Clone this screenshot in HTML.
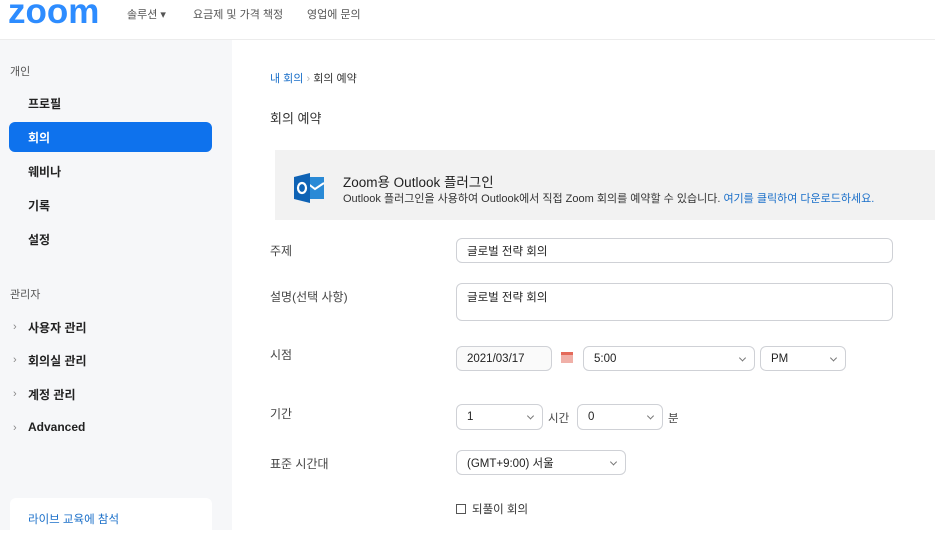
<!DOCTYPE html>
<html><head><meta charset="utf-8"><style>
*{margin:0;padding:0;box-sizing:border-box}
body{width:935px;height:530px;overflow:hidden;background:#fff;font-family:"Liberation Sans","Noto Sans CJK KR",sans-serif;color:#232333;position:relative}
.a{position:absolute;white-space:nowrap}
.hdr{position:absolute;left:0;top:0;width:935px;height:40px;border-bottom:1px solid #ececec;background:#fff}
.nav{font-size:11px;color:#555;top:6px}
.side{position:absolute;left:0;top:40px;width:232px;height:490px;background:#f6f7f9}
.si{font-size:12px;font-weight:bold;color:#222;left:28px}
.sh{font-size:11px;color:#555;left:10px}
.ar{font-size:11px;color:#888;left:13px}
.lbl{font-size:12px;color:#444;left:270px}
.box{position:absolute;border:1px solid #cfd1d6;border-radius:6px;background:#fff;font-size:11.5px;color:#222;padding-left:10px;display:flex;align-items:center}
.chev{position:absolute;right:9px;top:50%;width:5px;height:5px;border-right:1px solid #777;border-bottom:1px solid #777;transform:translateY(-70%) rotate(45deg)}
</style></head><body>
<div class="hdr">
<div class="a" style="left:8px;top:-6px;font-size:35px;line-height:1;font-weight:bold;color:#2d8cff;letter-spacing:0px;font-family:'Liberation Sans',sans-serif">zoom</div>
<div class="a nav" style="left:127px">솔루션 ▾</div>
<div class="a nav" style="left:193px">요금제 및 가격 책정</div>
<div class="a nav" style="left:307px">영업에 문의</div>
</div>
<div class="side"></div>
<div class="a sh" style="top:63px">개인</div>
<div class="a si" style="top:95px">프로필</div>
<div class="a" style="left:9px;top:122px;width:203px;height:30px;background:#0e72ed;border-radius:6px"></div>
<div class="a si" style="top:129px;color:#fff">회의</div>
<div class="a si" style="top:163px">웨비나</div>
<div class="a si" style="top:197px">기록</div>
<div class="a si" style="top:231px">설정</div>
<div class="a sh" style="top:286px">관리자</div>
<div class="a ar" style="top:321px">›</div><div class="a si" style="top:319px">사용자 관리</div>
<div class="a ar" style="top:354px">›</div><div class="a si" style="top:352px">회의실 관리</div>
<div class="a ar" style="top:388px">›</div><div class="a si" style="top:386px">계정 관리</div>
<div class="a ar" style="top:422px">›</div><div class="a si" style="top:420px">Advanced</div>
<div class="a" style="left:10px;top:498px;width:202px;height:40px;background:#fff;border-radius:6px"></div>
<div class="a" style="left:28px;top:511px;font-size:11.5px;color:#1a6fc9">라이브 교육에 참석</div>

<div class="a" style="left:270px;top:70px;font-size:11px;color:#1a6fc9">내 회의 <span style="color:#bbb">›</span> <span style="color:#333">회의 예약</span></div>
<div class="a" style="left:270px;top:108px;font-size:13px;color:#333">회의 예약</div>
<div class="a" style="left:275px;top:150px;width:660px;height:70px;background:#f2f2f2"></div>
<svg class="a" style="left:293px;top:171px" width="34" height="34" viewBox="0 0 34 34"><path d="M11 6h20v22H11z" fill="#2a8ad6"/><path d="M14 12l8 6 9-6" stroke="#fff" stroke-width="2" fill="none"/><path d="M1 6l16-4v30L1 28z" fill="#0f63b5"/><ellipse cx="9" cy="17" rx="4" ry="5" fill="none" stroke="#fff" stroke-width="2.2"/></svg>
<div class="a" style="left:343px;top:171px;font-size:13.5px;color:#222">Zoom용 Outlook 플러그인</div>
<div class="a" style="left:343px;top:190px;font-size:11px;color:#333">Outlook 플러그인을 사용하여 Outlook에서 직접 Zoom 회의를 예약할 수 있습니다. <span style="color:#1a6fc9">여기를 클릭하여 다운로드하세요.</span></div>

<div class="a lbl" style="top:242px">주제</div>
<div class="box" style="left:456px;top:238px;width:437px;height:25px">글로벌 전략 회의</div>
<div class="a lbl" style="top:288px">설명(선택 사항)</div>
<div class="box" style="left:456px;top:283px;width:437px;height:38px;align-items:flex-start;padding-top:5px">글로벌 전략 회의</div>
<div class="a lbl" style="top:346px">시점</div>
<div class="box" style="left:456px;top:346px;width:96px;height:25px;background:#fafafa">2021/03/17</div>
<div class="a" style="left:561px;top:352px;width:12px;height:11px;background:#f0b0a8;border-top:3px solid #e46a5a"></div>
<div class="box" style="left:583px;top:346px;width:172px;height:25px">5:00<i class="chev"></i></div>
<div class="box" style="left:760px;top:346px;width:86px;height:25px">PM<i class="chev"></i></div>
<div class="a lbl" style="top:405px">기간</div>
<div class="box" style="left:456px;top:404px;width:87px;height:26px">1<i class="chev"></i></div>
<div class="a" style="left:548px;top:410px;font-size:11.5px;color:#444">시간</div>
<div class="box" style="left:577px;top:404px;width:86px;height:26px">0<i class="chev"></i></div>
<div class="a" style="left:668px;top:410px;font-size:11.5px;color:#444">분</div>
<div class="a lbl" style="top:455px">표준 시간대</div>
<div class="box" style="left:456px;top:450px;width:170px;height:25px">(GMT+9:00) 서울<i class="chev"></i></div>
<div class="a" style="left:456px;top:504px;width:10px;height:10px;border:1px solid #555"></div>
<div class="a" style="left:472px;top:501px;font-size:11.5px;color:#333">되풀이 회의</div>
</body></html>
